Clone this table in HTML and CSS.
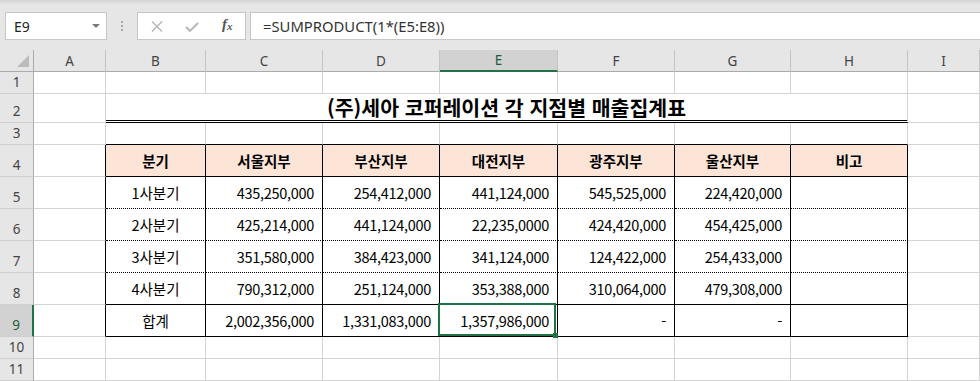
FILE: index.html
```html
<!DOCTYPE html>
<html lang="ko">
<head>
<meta charset="utf-8">
<title>매출집계표</title>
<link rel="stylesheet" href="styles.css">
</head>
<body>
<div class="toolbar">
  <div class="namebox"><span>E9</span><span class="caret"></span></div>
  <div class="grip"><i></i><i></i><i></i></div>
  <div class="fxbox">
    <svg class="ico-x" width="12" height="11" viewBox="0 0 12 11"><path d="M1 0.5 L11 10.5 M11 0.5 L1 10.5" stroke="#b4b4b4" stroke-width="1.4" fill="none"/></svg>
    <svg class="ico-ok" width="14" height="10" viewBox="0 0 14 10"><path d="M1 5 L5 9 L13 1" stroke="#b4b4b4" stroke-width="1.8" fill="none"/></svg>
    <span class="fx">f<sub>x</sub></span>
  </div>
  <div class="formula">=SUMPRODUCT(1*(E5:E8))</div>
</div>

<div class="sheet">
  <div class="row rhdr">
    <div class="corner"><span class="tri"></span></div>
    <div class="ch">A</div><div class="ch">B</div><div class="ch">C</div><div class="ch">D</div>
    <div class="ch sel">E</div><div class="ch">F</div><div class="ch">G</div><div class="ch">H</div><div class="ch">I</div>
  </div>

  <div class="row r22">
    <div class="rh">1</div>
    <div class="c"></div><div class="c"></div><div class="c"></div><div class="c"></div><div class="c"></div><div class="c"></div><div class="c"></div><div class="c"></div><div class="c"></div>
  </div>

  <div class="row r2">
    <div class="rh">2</div>
    <div class="c"></div>
    <div class="c title">(주)세아 코퍼레이션 각 지점별 매출집계표</div>
    <div class="c"></div>
  </div>

  <div class="row r22">
    <div class="rh">3</div>
    <div class="c"></div>
    <div class="c tt"></div><div class="c tt"></div><div class="c tt"></div><div class="c tt"></div><div class="c tt"></div><div class="c tt"></div><div class="c tt"></div>
    <div class="c"></div>
  </div>

  <div class="row r32">
    <div class="rh">4</div>
    <div class="c lb"></div>
    <div class="c t sb head">분기</div>
    <div class="c t sb head">서울지부</div>
    <div class="c t sb head">부산지부</div>
    <div class="c t sb head">대전지부</div>
    <div class="c t sb head">광주지부</div>
    <div class="c t sb head">울산지부</div>
    <div class="c t sb head">비고</div>
    <div class="c"></div>
  </div>

  <div class="row r32">
    <div class="rh">5</div>
    <div class="c lb"></div>
    <div class="c t db ctr">1사분기</div>
    <div class="c t db num">435,250,000</div>
    <div class="c t db num">254,412,000</div>
    <div class="c t db num">441,124,000</div>
    <div class="c t db num">545,525,000</div>
    <div class="c t db num">224,420,000</div>
    <div class="c t db"></div>
    <div class="c"></div>
  </div>

  <div class="row r32">
    <div class="rh">6</div>
    <div class="c lb"></div>
    <div class="c t db ctr">2사분기</div>
    <div class="c t db num">425,214,000</div>
    <div class="c t db num">441,124,000</div>
    <div class="c t db num">22,235,0000</div>
    <div class="c t db num">424,420,000</div>
    <div class="c t db num">454,425,000</div>
    <div class="c t db"></div>
    <div class="c"></div>
  </div>

  <div class="row r32">
    <div class="rh">7</div>
    <div class="c lb"></div>
    <div class="c t db ctr">3사분기</div>
    <div class="c t db num">351,580,000</div>
    <div class="c t db num">384,423,000</div>
    <div class="c t db num">341,124,000</div>
    <div class="c t db num">124,422,000</div>
    <div class="c t db num">254,433,000</div>
    <div class="c t db"></div>
    <div class="c"></div>
  </div>

  <div class="row r32">
    <div class="rh">8</div>
    <div class="c lb"></div>
    <div class="c t sb ctr">4사분기</div>
    <div class="c t sb num">790,312,000</div>
    <div class="c t sb num">251,124,000</div>
    <div class="c t sb num">353,388,000</div>
    <div class="c t sb num">310,064,000</div>
    <div class="c t sb num">479,308,000</div>
    <div class="c t sb"></div>
    <div class="c"></div>
  </div>

  <div class="row r32">
    <div class="rh rsel">9</div>
    <div class="c lb"></div>
    <div class="c t sb ctr">합계</div>
    <div class="c t sb num">2,002,356,000</div>
    <div class="c t sb num">1,331,083,000</div>
    <div class="c t sb num active">1,357,986,000<span class="selbox"></span><span class="handle"></span></div>
    <div class="c t sb num">-</div>
    <div class="c t sb num">-</div>
    <div class="c t sb"></div>
    <div class="c"></div>
  </div>

  <div class="row r22">
    <div class="rh">10</div>
    <div class="c"></div><div class="c"></div><div class="c"></div><div class="c"></div><div class="c"></div><div class="c"></div><div class="c"></div><div class="c"></div><div class="c"></div>
  </div>

  <div class="row r22">
    <div class="rh">11</div>
    <div class="c"></div><div class="c"></div><div class="c"></div><div class="c"></div><div class="c"></div><div class="c"></div><div class="c"></div><div class="c"></div><div class="c"></div>
  </div>
</div>
</body>
</html>
```

FILE: styles.css
```css
* { box-sizing: border-box; }

body {
  margin: 0;
  width: 980px;
  height: 381px;
  overflow: hidden;
  background: #e6e6e6;
  font-family: "Noto Sans CJK KR", "Noto Sans", sans-serif;
}

/* ---------- formula bar ---------- */
.toolbar {
  height: 50px;
  display: flex;
  align-items: flex-start;
  padding: 12px 0 0 5px;
  background: linear-gradient(#d4d4d4 0, #e6e6e6 5px);
}

.namebox {
  width: 102px;
  height: 28px;
  background: #fff;
  border: 1px solid #c6c6c6;
  display: flex;
  align-items: center;
  justify-content: space-between;
  padding: 0 6px 0 8px;
  font-family: "Noto Sans", sans-serif;
  font-size: 14px;
  color: #222;
}

.caret {
  width: 0;
  height: 0;
  border-left: 4px solid transparent;
  border-right: 4px solid transparent;
  border-top: 4px solid #7a7a7a;
}

.grip {
  width: 30px;
  height: 28px;
  display: flex;
  flex-direction: column;
  align-items: center;
  justify-content: center;
  gap: 2px;
}
.grip i {
  display: block;
  width: 2px;
  height: 2px;
  background: #a8a8a8;
}

.fxbox {
  width: 109px;
  height: 28px;
  background: #fff;
  border: 1px solid #c6c6c6;
  display: flex;
  align-items: center;
  padding-left: 13px;
}
.ico-x { margin-right: 22px; }
.ico-ok { margin-right: 23px; margin-top: 2px; }
.fx {
  font-family: "Liberation Serif", serif;
  font-style: italic;
  font-weight: bold;
  font-size: 15px;
  color: #555;
  margin-top: -3px;
}
.fx sub {
  font-size: 11px;
  vertical-align: -1px;
}

.formula {
  flex: 1;
  height: 28px;
  margin-left: 4px;
  background: #fff;
  border: 1px solid #c6c6c6;
  border-right: none;
  display: flex;
  align-items: center;
  padding-left: 12px;
  font-family: "Noto Sans", sans-serif;
  font-size: 14.8px;
  color: #333;
}

/* ---------- sheet grid ---------- */
.row {
  display: grid;
  grid-template-columns: 34px 72px 100px 117px 117px 118px 117px 116px 117px 72px;
  grid-template-rows: 100%;
}
.rhdr { height: 22px; }
.r22 { height: 22px; }
.r2 { height: 29px; }
.r32 { height: 32px; }

.corner {
  background: #e6e6e6;
  border-right: 1px solid #ababab;
  border-bottom: 1px solid #ababab;
  position: relative;
}
.tri {
  position: absolute;
  right: 4px;
  bottom: 4px;
  width: 0;
  height: 0;
  border-left: 12px solid transparent;
  border-bottom: 12px solid #bcbcbc;
}

.ch {
  background: #e6e6e6;
  border-right: 1px solid #c4c4c4;
  border-bottom: 1px solid #ababab;
  display: flex;
  align-items: center;
  justify-content: center;
  font-family: "Noto Sans", sans-serif;
  font-size: 13.5px;
  color: #444;
}
.ch.sel {
  background: #d2d2d2;
  border-bottom: 2px solid #217346;
  color: #1e5c3a;
}

.rh {
  background: #e6e6e6;
  border-right: 1px solid #ababab;
  border-bottom: 1px solid #cfcfcf;
  display: flex;
  align-items: flex-end;
  justify-content: center;
  padding-bottom: 1px;
  font-family: "Noto Sans", sans-serif;
  font-size: 13.5px;
  line-height: 20px;
  color: #444;
}
.rh.rsel {
  background: #d2d2d2;
  border-right: 2px solid #217346;
  color: #1e5c3a;
}

.c {
  background: #fff;
  border-right: 1px solid #d4d4d4;
  border-bottom: 1px solid #d4d4d4;
  display: flex;
  align-items: center;
  white-space: nowrap;
  font-size: 14.5px;
  line-height: 20px;
  color: #000;
}

.title {
  grid-column: span 7;
  justify-content: center;
  font-size: 20.5px;
  line-height: 24px;
  font-weight: bold;
  border-bottom: 3px double #000;
  padding-bottom: 1px;
}

.tt { border-bottom-color: #000; }
.lb { border-right-color: #000; }
.t { border-right-color: #000; }
.sb { border-bottom: 1px solid #000; }
.db { border-bottom: 1px dotted #000; }

.head {
  background: #fce4d6;
  justify-content: center;
  font-weight: bold;
}
.ctr { justify-content: center; }
.num {
  justify-content: flex-end;
  padding-right: 8px;
  letter-spacing: -0.3px;
}

.active { position: relative; }
.selbox {
  position: absolute;
  top: -2px;
  left: -2px;
  right: 1px;
  bottom: 0;
  border: 2px solid #217346;
}
.handle {
  position: absolute;
  right: -1px;
  bottom: -2px;
  width: 5px;
  height: 5px;
  background: #217346;
}
```
